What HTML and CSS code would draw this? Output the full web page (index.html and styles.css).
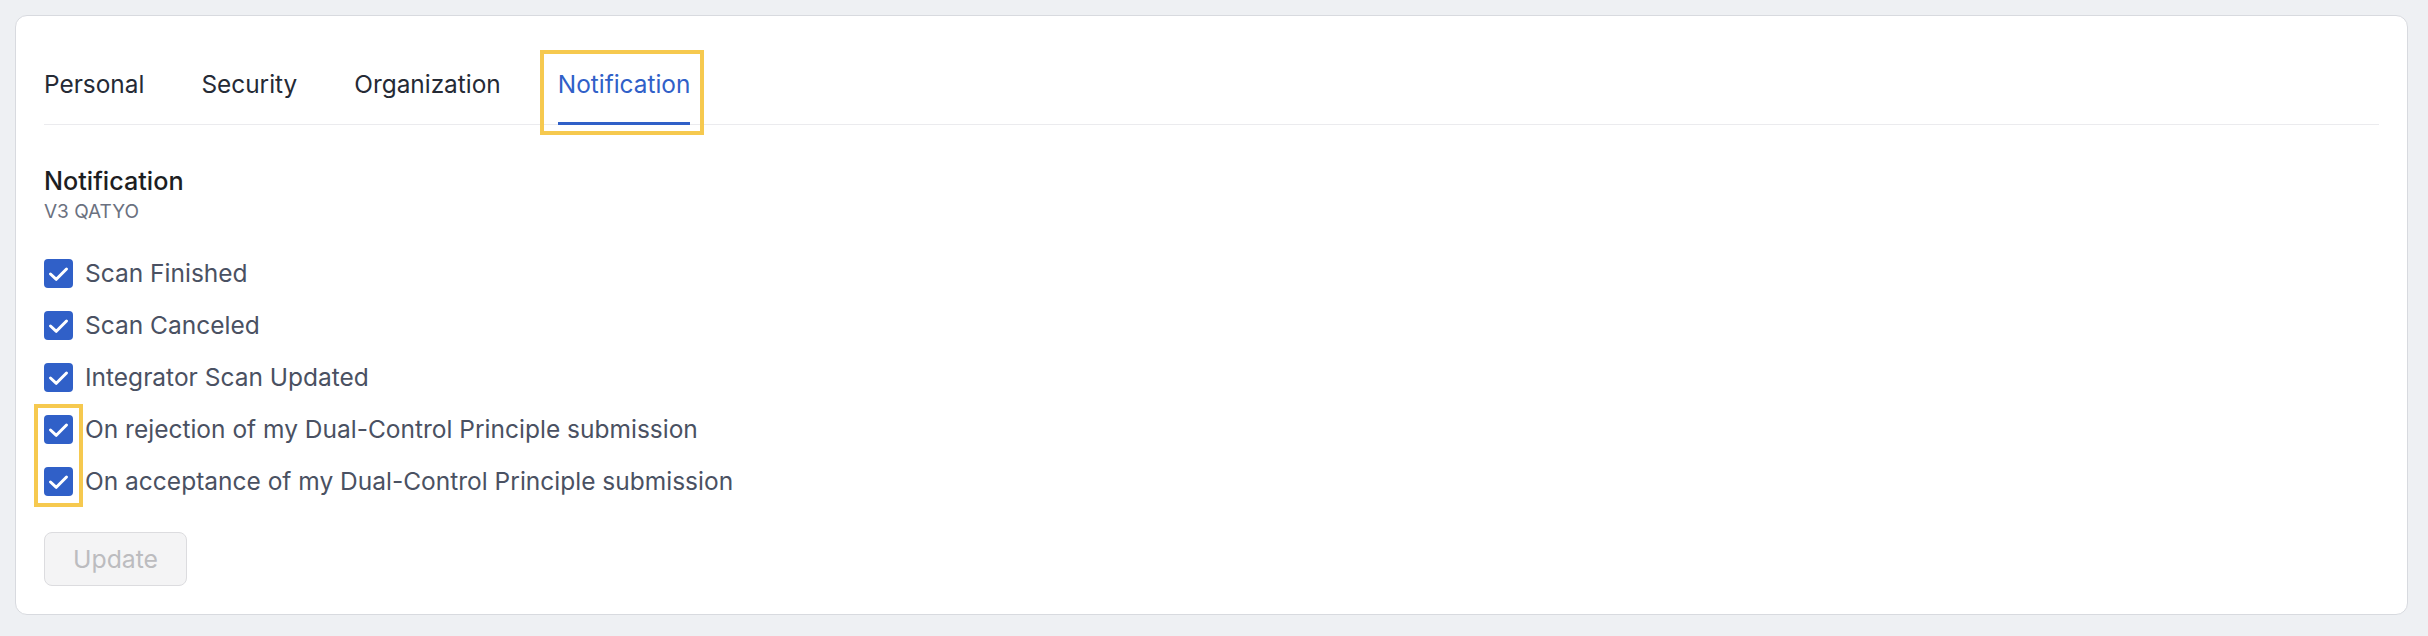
FILE: index.html
```html
<!DOCTYPE html>
<html lang="en">
  <head>
    <meta charset="UTF-8" />
    <title>Settings - Notification</title>
    <meta name="viewport" content="width=device-width, initial-scale=1.0" />
    <link rel="stylesheet" href="styles.css">
  </head>
  <body>
    <div class="settings-card">
      <!-- TABS -->
      <nav class="tabs">
        <a class="tab">Personal</a>
        <a class="tab">Security</a>
        <a class="tab">Organization</a>
        <a class="tab active">Notification</a>
      </nav>

      <!-- NOTIFICATION SETTINGS -->
      <section class="section">
        <h2 class="section-title">Notification</h2>
        <p class="section-sub">V3 QATYO</p>

        <div class="options">
          <label class="option">
            <span class="checkbox"><svg viewBox="0 0 29 29"><polyline points="6.5,15 12.3,20.3 22.5,10" /></svg></span>
            Scan Finished
          </label>
          <label class="option">
            <span class="checkbox"><svg viewBox="0 0 29 29"><polyline points="6.5,15 12.3,20.3 22.5,10" /></svg></span>
            Scan Canceled
          </label>
          <label class="option">
            <span class="checkbox"><svg viewBox="0 0 29 29"><polyline points="6.5,15 12.3,20.3 22.5,10" /></svg></span>
            Integrator Scan Updated
          </label>

          <!-- highlighted pair -->
          <div class="option-group">
            <label class="option">
              <span class="checkbox"><svg viewBox="0 0 29 29"><polyline points="6.5,15 12.3,20.3 22.5,10" /></svg></span>
              On rejection of my Dual-Control Principle submission
            </label>
            <label class="option">
              <span class="checkbox"><svg viewBox="0 0 29 29"><polyline points="6.5,15 12.3,20.3 22.5,10" /></svg></span>
              On acceptance of my Dual-Control Principle submission
            </label>
          </div>
        </div>

        <button class="btn-update" disabled>Update</button>
      </section>
    </div>
  </body>
</html>
```

FILE: styles.css
```css
/* RESET & VARIABLES */
*,
*::before,
*::after {
  margin: 0;
  padding: 0;
  box-sizing: border-box;
}
:root {
  --primary-color: #3060c8;
  --highlight: #f6c94f;
  --text-dark: #252a35;
  --text-label: #4a5162;
  --text-muted: #6b7180;
}

body {
  font-family: "Inter", "Liberation Sans", sans-serif;
  background: #eef0f3;
  padding: 15px 20px 21px 15px;
}

/* CARD */
.settings-card {
  background: #fff;
  border: 1px solid #d8dadf;
  border-radius: 12px;
  padding: 0 28px 28px;
}

/* TABS */
.tabs {
  display: flex;
  gap: 57px;
  padding-top: 53px;
  border-bottom: 1px solid #ebebee;
}
.tab {
  position: relative;
  font-size: 24.4px;
  line-height: 30px;
  color: var(--text-dark);
  padding-bottom: 23px;
  border-bottom: 3px solid transparent;
  margin-bottom: -1px;
  cursor: pointer;
}
.tab.active {
  color: var(--primary-color);
  border-bottom-color: var(--primary-color);
}
/* yellow annotation frame */
.tab.active::after {
  content: "";
  position: absolute;
  top: -19px;
  left: -18px;
  right: -14px;
  bottom: -13px;
  border: 4px solid var(--highlight);
}

/* SECTION */
.section {
  margin-top: 41px;
}
.section-title {
  font-size: 25.2px;
  font-weight: 500;
  line-height: 30px;
  color: #1d1e22;
}
.section-sub {
  margin-top: 4px;
  font-size: 19px;
  line-height: 24px;
  color: var(--text-muted);
  text-transform: uppercase;
}

/* CHECKBOX LIST */
.options,
.option-group {
  display: flex;
  flex-direction: column;
  gap: 22px;
}
.options {
  margin-top: 34px;
}
.option-group {
  position: relative;
}
.option-group::before {
  content: "";
  position: absolute;
  top: -10px;
  bottom: -11px;
  left: -10px;
  width: 49px;
  border: 4px solid var(--highlight);
}
.option {
  display: flex;
  align-items: center;
  gap: 12px;
  font-size: 24.5px;
  line-height: 30px;
  color: var(--text-label);
}
.checkbox {
  width: 29px;
  height: 29px;
  border-radius: 4px;
  background: var(--primary-color);
  flex-shrink: 0;
}
.checkbox svg {
  display: block;
  width: 29px;
  height: 29px;
  fill: none;
  stroke: #fff;
  stroke-width: 3;
  stroke-linecap: round;
  stroke-linejoin: round;
}

/* BUTTON */
.btn-update {
  margin-top: 36px;
  font-family: inherit;
  font-size: 24.8px;
  line-height: 30px;
  padding: 11px 28px;
  border: 1px solid #dcdcdf;
  border-radius: 8px;
  background: #f4f4f5;
  color: #bcbcbf;
}
```
